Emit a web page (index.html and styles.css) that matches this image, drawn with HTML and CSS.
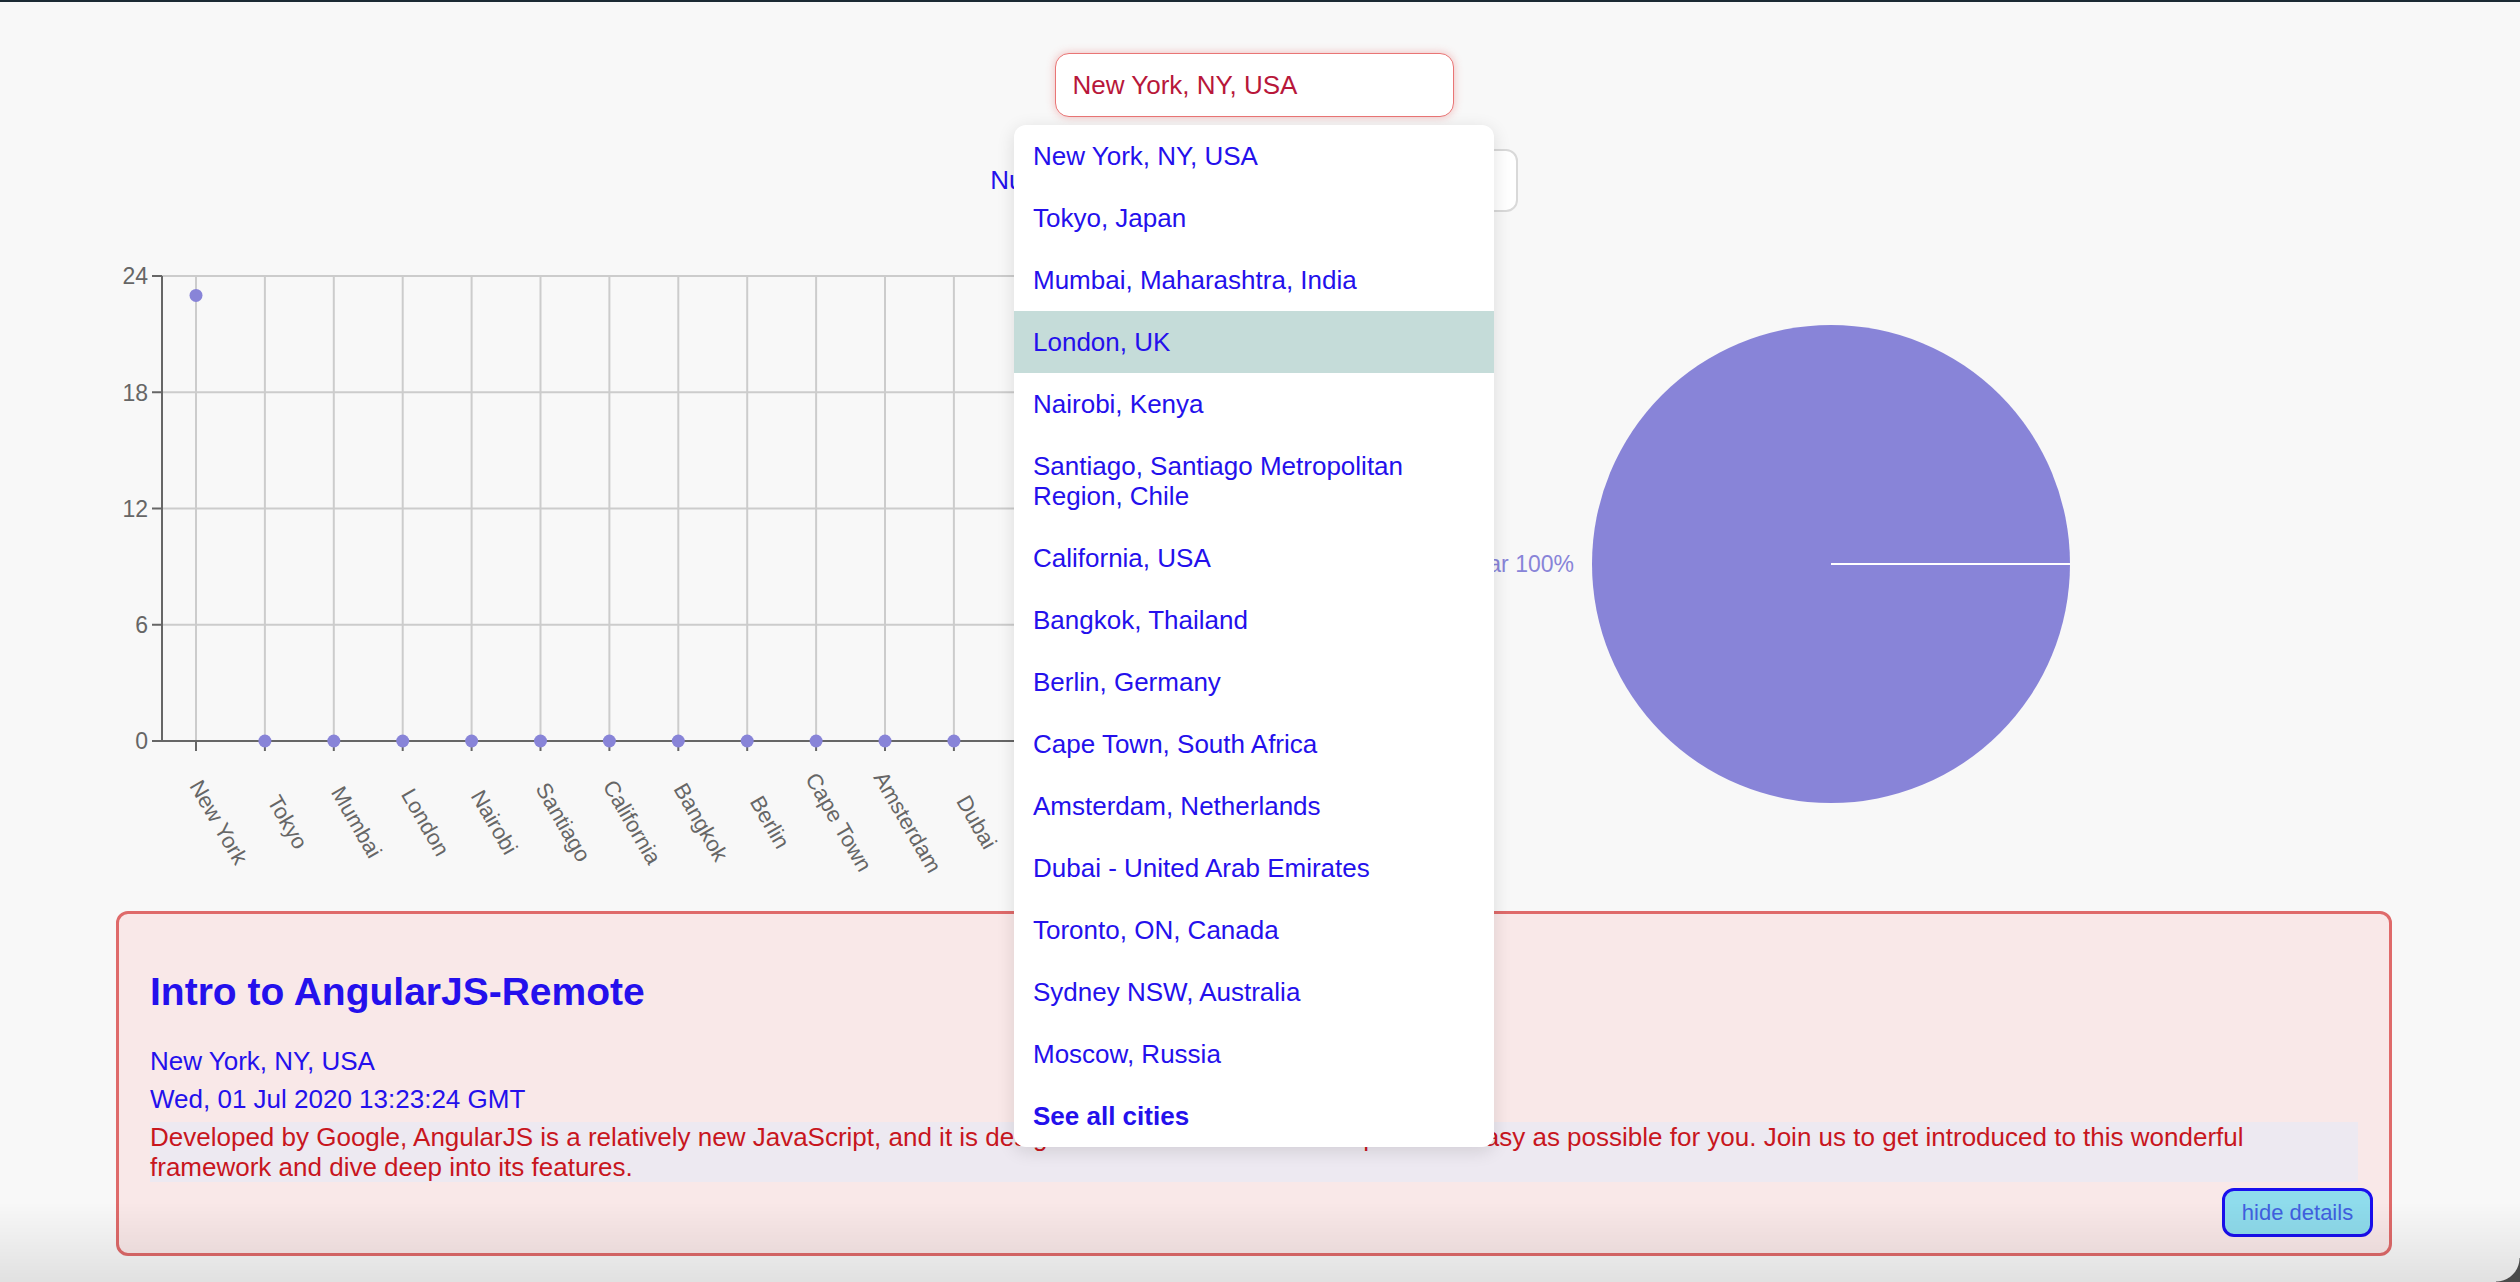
FILE: index.html
```html
<!DOCTYPE html>
<html>
<head>
<meta charset="utf-8">
<title>Meet App</title>
<link rel="stylesheet" href="styles.css">
</head>
<body>
<div class="topbar"></div>
<div class="app">
  <div class="city-search">
    <input class="city-input" type="text" value="New York, NY, USA">
    <ul class="suggestions">
      <li>New York, NY, USA</li>
      <li>Tokyo, Japan</li>
      <li>Mumbai, Maharashtra, India</li>
      <li class="active">London, UK</li>
      <li>Nairobi, Kenya</li>
      <li>Santiago, Santiago Metropolitan Region, Chile</li>
      <li>California, USA</li>
      <li>Bangkok, Thailand</li>
      <li>Berlin, Germany</li>
      <li>Cape Town, South Africa</li>
      <li>Amsterdam, Netherlands</li>
      <li>Dubai - United Arab Emirates</li>
      <li>Toronto, ON, Canada</li>
      <li>Sydney NSW, Australia</li>
      <li>Moscow, Russia</li>
      <li class="all">See all cities</li>
    </ul>
  </div>

  <div class="number-row">
    <label class="number-label">Number of Events:</label>
    <input class="number-input" type="text" value="32">
  </div>

  <div class="charts">
    <svg class="scatter" width="1260" height="660" viewBox="0 0 1260 660">
      <g class="grid" stroke="#cccccc" stroke-width="2">
        <line x1="162" y1="36" x2="1195" y2="36"/>
        <line x1="162" y1="152.25" x2="1195" y2="152.25"/>
        <line x1="162" y1="268.5" x2="1195" y2="268.5"/>
        <line x1="162" y1="384.75" x2="1195" y2="384.75"/>
        <line x1="196" y1="36" x2="196" y2="501"/>
        <line x1="264.9" y1="36" x2="264.9" y2="501"/>
        <line x1="333.8" y1="36" x2="333.8" y2="501"/>
        <line x1="402.7" y1="36" x2="402.7" y2="501"/>
        <line x1="471.6" y1="36" x2="471.6" y2="501"/>
        <line x1="540.5" y1="36" x2="540.5" y2="501"/>
        <line x1="609.4" y1="36" x2="609.4" y2="501"/>
        <line x1="678.3" y1="36" x2="678.3" y2="501"/>
        <line x1="747.2" y1="36" x2="747.2" y2="501"/>
        <line x1="816.1" y1="36" x2="816.1" y2="501"/>
        <line x1="885" y1="36" x2="885" y2="501"/>
        <line x1="953.9" y1="36" x2="953.9" y2="501"/>
        <line x1="1022.8" y1="36" x2="1022.8" y2="501"/>
        <line x1="1091.7" y1="36" x2="1091.7" y2="501"/>
        <line x1="1160.6" y1="36" x2="1160.6" y2="501"/>
      </g>
      <g class="axes" stroke="#666666" stroke-width="2">
        <line x1="162" y1="36" x2="162" y2="502"/>
        <line x1="161" y1="501" x2="1195" y2="501"/>
        <line x1="152" y1="36" x2="162" y2="36"/>
        <line x1="152" y1="152.25" x2="162" y2="152.25"/>
        <line x1="152" y1="268.5" x2="162" y2="268.5"/>
        <line x1="152" y1="384.75" x2="162" y2="384.75"/>
        <line x1="152" y1="501" x2="162" y2="501"/>
        <line x1="196" y1="501" x2="196" y2="511"/>
        <line x1="264.9" y1="501" x2="264.9" y2="511"/>
        <line x1="333.8" y1="501" x2="333.8" y2="511"/>
        <line x1="402.7" y1="501" x2="402.7" y2="511"/>
        <line x1="471.6" y1="501" x2="471.6" y2="511"/>
        <line x1="540.5" y1="501" x2="540.5" y2="511"/>
        <line x1="609.4" y1="501" x2="609.4" y2="511"/>
        <line x1="678.3" y1="501" x2="678.3" y2="511"/>
        <line x1="747.2" y1="501" x2="747.2" y2="511"/>
        <line x1="816.1" y1="501" x2="816.1" y2="511"/>
        <line x1="885" y1="501" x2="885" y2="511"/>
        <line x1="953.9" y1="501" x2="953.9" y2="511"/>
        <line x1="1022.8" y1="501" x2="1022.8" y2="511"/>
        <line x1="1091.7" y1="501" x2="1091.7" y2="511"/>
        <line x1="1160.6" y1="501" x2="1160.6" y2="511"/>
      </g>
      <g class="ytick-labels" fill="#666666" font-size="23" text-anchor="end">
        <text x="148" y="36" dy="0.36em">24</text>
        <text x="148" y="152.25" dy="0.36em">18</text>
        <text x="148" y="268.5" dy="0.36em">12</text>
        <text x="148" y="384.75" dy="0.36em">6</text>
        <text x="148" y="501" dy="0.36em">0</text>
      </g>
      <g class="xtick-labels" fill="#666666" font-size="22" text-anchor="middle">
        <text x="219" y="582" dy="0.36em" transform="rotate(60 219 582)">New York</text>
        <text x="287.9" y="582" dy="0.36em" transform="rotate(60 287.9 582)">Tokyo</text>
        <text x="356.8" y="582" dy="0.36em" transform="rotate(60 356.8 582)">Mumbai</text>
        <text x="425.7" y="582" dy="0.36em" transform="rotate(60 425.7 582)">London</text>
        <text x="494.6" y="582" dy="0.36em" transform="rotate(60 494.6 582)">Nairobi</text>
        <text x="563.5" y="582" dy="0.36em" transform="rotate(60 563.5 582)">Santiago</text>
        <text x="632.4" y="582" dy="0.36em" transform="rotate(60 632.4 582)">California</text>
        <text x="701.3" y="582" dy="0.36em" transform="rotate(60 701.3 582)">Bangkok</text>
        <text x="770.2" y="582" dy="0.36em" transform="rotate(60 770.2 582)">Berlin</text>
        <text x="839.1" y="582" dy="0.36em" transform="rotate(60 839.1 582)">Cape Town</text>
        <text x="908" y="582" dy="0.36em" transform="rotate(60 908 582)">Amsterdam</text>
        <text x="976.9" y="582" dy="0.36em" transform="rotate(60 976.9 582)">Dubai</text>
        <text x="1045.8" y="582" dy="0.36em" transform="rotate(60 1045.8 582)">Toronto</text>
        <text x="1114.7" y="582" dy="0.36em" transform="rotate(60 1114.7 582)">Sydney</text>
        <text x="1183.6" y="582" dy="0.36em" transform="rotate(60 1183.6 582)">Moscow</text>
      </g>
      <g class="points" fill="#8884d8">
        <circle cx="196" cy="55.4" r="6.5"/>
        <circle cx="264.9" cy="501" r="6.5"/>
        <circle cx="333.8" cy="501" r="6.5"/>
        <circle cx="402.7" cy="501" r="6.5"/>
        <circle cx="471.6" cy="501" r="6.5"/>
        <circle cx="540.5" cy="501" r="6.5"/>
        <circle cx="609.4" cy="501" r="6.5"/>
        <circle cx="678.3" cy="501" r="6.5"/>
        <circle cx="747.2" cy="501" r="6.5"/>
        <circle cx="816.1" cy="501" r="6.5"/>
        <circle cx="885" cy="501" r="6.5"/>
        <circle cx="953.9" cy="501" r="6.5"/>
        <circle cx="1022.8" cy="501" r="6.5"/>
        <circle cx="1091.7" cy="501" r="6.5"/>
        <circle cx="1160.6" cy="501" r="6.5"/>
      </g>
    </svg>
    <svg class="pie" width="1248" height="660" viewBox="0 0 1248 660">
      <circle cx="571" cy="324" r="239" fill="#8884d8"/>
      <line x1="571" y1="324" x2="810" y2="324" stroke="#ffffff" stroke-width="2"/>
      <text x="314" y="324" dy="0.36em" text-anchor="end" fill="#8884d8" font-size="23">Angular 100%</text>
    </svg>
  </div>

  <div class="event">
    <h2 class="event-title">Intro to AngularJS-Remote</h2>
    <p class="event-line">New York, NY, USA</p>
    <p class="event-line">Wed, 01 Jul 2020 13:23:24 GMT</p>
    <p class="event-desc">Developed by Google, AngularJS is a relatively new JavaScript, and it is desig<span class="desc-tight">ned to make front-end development as </span>easy as possible for you. Join us to get introduced to this wonderful framework and dive deep into its features.</p>
    <div class="event-actions">
      <button class="details-btn">hide details</button>
    </div>
  </div>
</div>
<div class="bottom-fade"></div>
<div class="window-corner"></div>
</body>
</html>
```

FILE: styles.css
```css
html, body {
  margin: 0;
  padding: 0;
}

body {
  width: 2520px;
  height: 1282px;
  overflow: hidden;
  background: #f8f8f8;
  font-family: "Liberation Sans", Arial, Helvetica, sans-serif;
}

svg text {
  font-family: "Liberation Sans", Arial, Helvetica, sans-serif;
}

.topbar {
  height: 2px;
  background: #1b2a33;
}

.app {
  width: 2508px;
}

/* City search */
.city-search {
  position: relative;
  width: 399px;
  margin: 51px auto 0;
}

.city-input {
  display: block;
  box-sizing: border-box;
  width: 399px;
  height: 64px;
  margin: 0;
  padding: 0 17px;
  border: 1.5px solid #e97575;
  border-radius: 14px;
  box-shadow: 0 0 8px rgba(232, 110, 110, 0.45);
  background: #ffffff;
  color: #b8173a;
  font-family: "Liberation Sans", Arial, Helvetica, sans-serif;
  font-size: 26px;
  outline: none;
}

.suggestions {
  position: absolute;
  top: 72px;
  left: 50%;
  transform: translateX(-50%);
  z-index: 10;
  width: 480px;
  margin: 0;
  padding: 0;
  list-style: none;
  background: #ffffff;
  border-radius: 12px;
  box-shadow: 0 4px 18px rgba(0, 0, 0, 0.12);
  overflow: hidden;
}

.suggestions li {
  padding: 16px 19px;
  font-size: 26px;
  line-height: 30px;
  color: #2410ec;
}

.suggestions li.active {
  background: #c5dcd9;
}

.suggestions li.all {
  font-weight: bold;
}

/* Number of events */
.number-row {
  display: flex;
  justify-content: center;
  align-items: center;
  gap: 12px;
  margin-top: 32px;
}

.number-label {
  font-size: 26px;
  color: #2410ec;
}

.number-input {
  box-sizing: border-box;
  width: 300px;
  height: 63px;
  margin: 0;
  padding: 0 17px;
  border: 2px solid #d9d9d9;
  border-radius: 12px;
  background: #ffffff;
  font-family: "Liberation Sans", Arial, Helvetica, sans-serif;
  font-size: 26px;
  color: #333333;
}

/* Charts */
.charts {
  display: flex;
  height: 660px;
  margin-top: 28px;
}

.scatter,
.pie {
  display: block;
  flex: none;
}

/* Event card */
.event {
  margin: 11px 116px 0;
  padding: 23px 31px 16px 31px;
  border: 3px solid #df6a6a;
  border-radius: 12px;
  background: #f9e8e8;
}

.event-title {
  margin: 32px 0;
  font-size: 39px;
  line-height: 45px;
  font-weight: bold;
  color: #2410ec;
}

.event-line {
  margin: 0 0 8px;
  font-size: 26px;
  line-height: 30px;
  color: #2410ec;
}

.event-desc {
  margin: 0;
  font-size: 26px;
  line-height: 30px;
  color: #c8161e;
  background: #ede9f1;
}

.desc-tight {
  letter-spacing: -0.8px;
}

.event-actions {
  display: flex;
  justify-content: flex-end;
  margin: 6px -15px 0 0;
}

.details-btn {
  box-sizing: border-box;
  width: 151px;
  height: 49px;
  padding: 0;
  border: 3px solid #1a0fee;
  border-radius: 12px;
  background: #8fdcec;
  color: #4060e0;
  font-family: "Liberation Sans", Arial, Helvetica, sans-serif;
  font-size: 22px;
}

/* Window chrome overlays */
.bottom-fade {
  position: fixed;
  left: 0;
  right: 0;
  bottom: 0;
  height: 80px;
  z-index: 20;
  pointer-events: none;
  background: linear-gradient(to bottom, rgba(0, 0, 0, 0), rgba(0, 0, 0, 0.09));
}

.window-corner {
  position: fixed;
  right: 0;
  bottom: 0;
  width: 24px;
  height: 24px;
  z-index: 21;
  pointer-events: none;
  background: radial-gradient(circle at 0 0, rgba(0, 0, 0, 0) 23px, #4a4a4a 24px);
}
```
